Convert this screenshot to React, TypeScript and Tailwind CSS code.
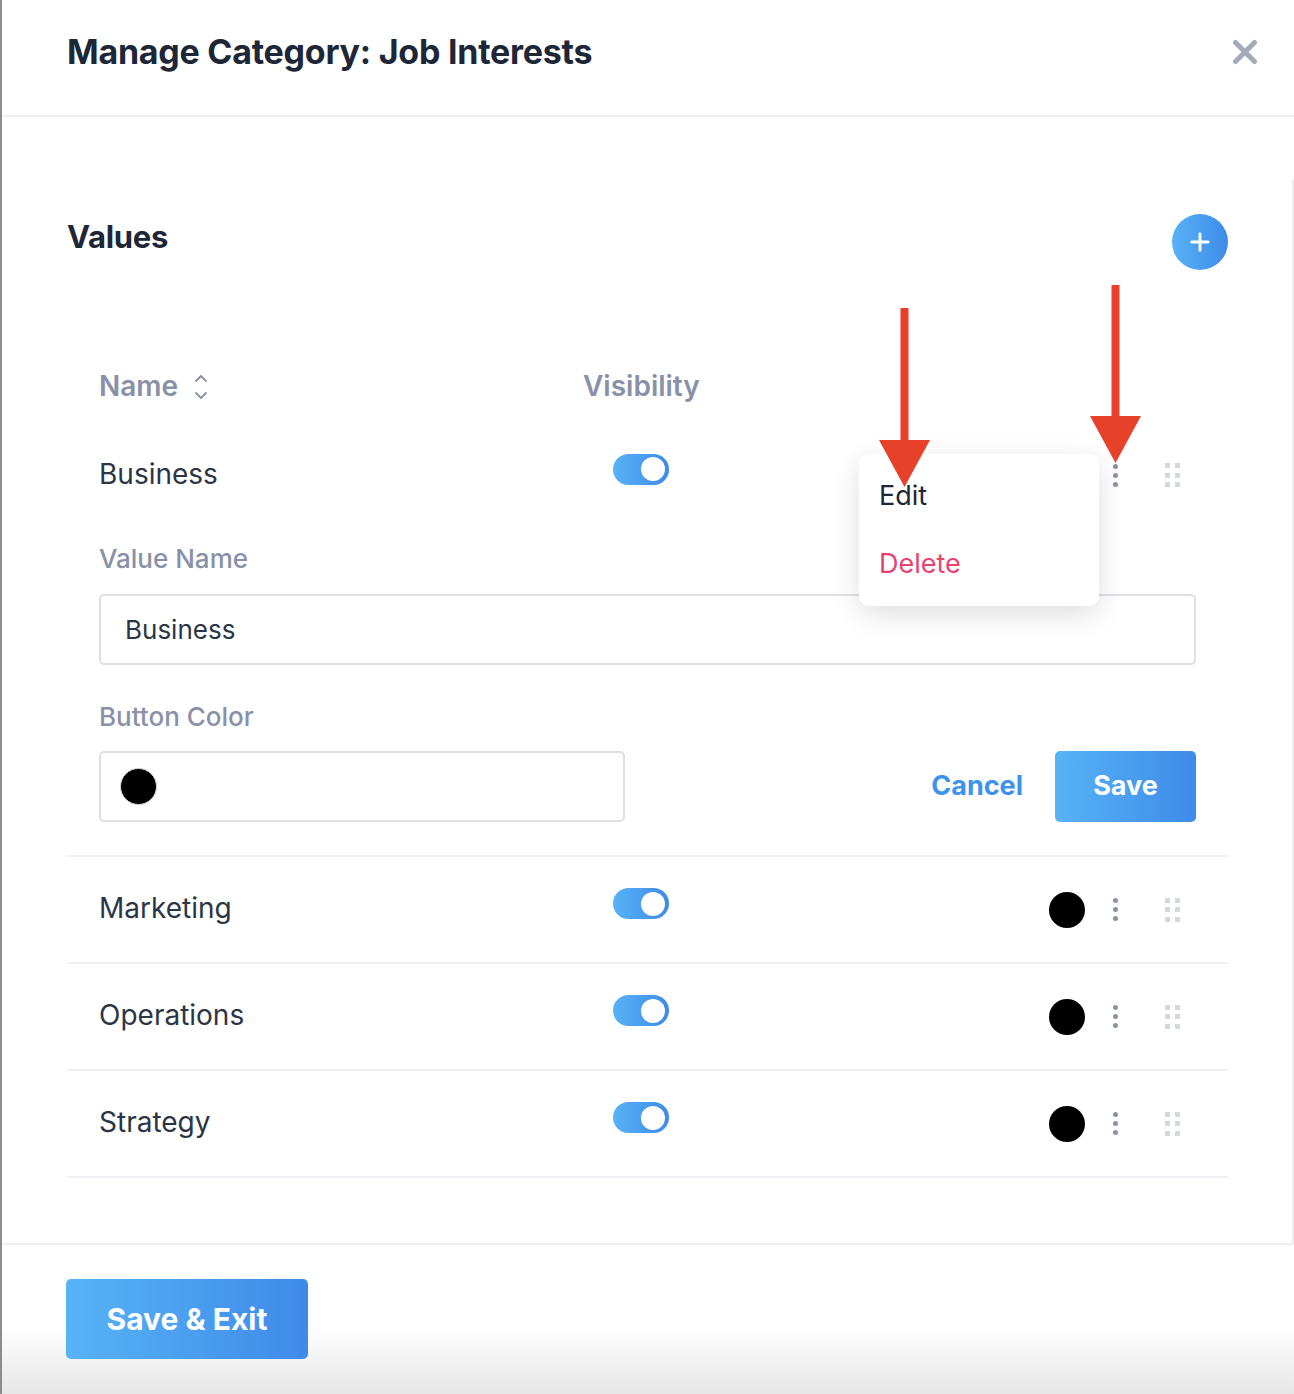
import { Plus } from 'lucide-react';

type Row = { name: string; color: string };

const rows: Row[] = [
    { name: 'Marketing', color: '#000000' },
    { name: 'Operations', color: '#000000' },
    { name: 'Strategy', color: '#000000' },
];

function Toggle() {
    return (
        <div className="w-[56px] h-[31px] rounded-full bg-linear-to-r from-[#58b3f6] to-[#3f8ae9] flex items-center justify-end pr-[4px]">
            <div className="w-[24px] h-[24px] rounded-full bg-white" />
        </div>
    );
}

function Kebab() {
    return (
        <div className="flex flex-col items-center gap-[4px] w-[6px]">
            <span className="block w-[5px] h-[5px] rounded-full bg-[#8a93a6]" />
            <span className="block w-[5px] h-[5px] rounded-full bg-[#8a93a6]" />
            <span className="block w-[5px] h-[5px] rounded-full bg-[#8a93a6]" />
        </div>
    );
}

function DragHandle() {
    return (
        <div className="grid grid-cols-2 gap-x-[5px] gap-y-[4.5px]">
            {Array.from({ length: 6 }).map((_, i) => (
                <span key={i} className="block w-[5px] h-[5px] bg-[#d3d7e0]" />
            ))}
        </div>
    );
}

function Arrow({ left, top, shaft }: { left: number; top: number; shaft: number }) {
    return (
        <svg
            className="absolute pointer-events-none"
            style={{ left, top }}
            width={52}
            height={shaft + 48}
            viewBox={`0 0 52 ${shaft + 48}`}
        >
            <rect x={21.5} y={0} width={8} height={shaft + 4} fill="#e8412a" />
            <polygon points={`0,${shaft} 51,${shaft} 25.5,${shaft + 47}`} fill="#e8412a" />
        </svg>
    );
}

export default function App() {
    return (
        <div
            className="relative w-[1294px] h-[1394px] bg-white border-l-2 border-[#8d8d8d] overflow-hidden"
            style={{ fontFamily: 'Inter, "Open Sans", sans-serif' }}
        >
            {/* header */}
            <div className="h-[117px] flex items-start justify-between pl-[65px] pr-[36px] pt-[26px] border-b-2 border-[#eff0f3]">
                <h1 className="text-[34px] font-bold text-[#1e2738] tracking-[-0.25px] leading-[52px]">
                    Manage Category: Job Interests
                </h1>
                <svg width="26" height="26" viewBox="0 0 26 26" className="mt-[13px]">
                    <path d="M3.5 3.5 L22.5 22.5 M22.5 3.5 L3.5 22.5" stroke="#a3aab9" strokeWidth="5" strokeLinecap="round" />
                </svg>
            </div>

            {/* body */}
            <div className="pt-[63px]">
                <div className="border-r-2 border-[#ececec] pl-[65px] pr-[64px] pt-[34px] pb-[65px]">
                    <div className="flex items-center justify-between h-[56px]">
                        <h2 className="text-[31px] font-bold text-[#1e2738] tracking-[-0.3px] -mt-[10px]">Values</h2>
                        <button className="w-[56px] h-[56px] rounded-full bg-linear-to-r from-[#58b3f6] to-[#3f8ae9] flex items-center justify-center">
                            <Plus className="w-[28px] h-[28px] text-white" strokeWidth={2.5} />
                        </button>
                    </div>

                    {/* table header */}
                    <div className="mt-[86px] h-[60px] flex items-center text-[28px] font-semibold text-[#8891a7]">
                        <div className="w-[516px] pl-[32px] flex items-center gap-[16px]">
                            <span>Name</span>
                            <svg width="14" height="28" viewBox="0 0 14 28" className="mt-[2px]">
                                <path d="M2 8 L7 3 L12 8 M2 20 L7 25 L12 20" fill="none" stroke="#8891a7" strokeWidth="1.8" strokeLinecap="round" strokeLinejoin="round" />
                            </svg>
                        </div>
                        <div>Visibility</div>
                    </div>

                    {/* expanded row */}
                    <div className="border-b-2 border-[#f0f0f4] pb-[33px]">
                        <div className="h-[118px] flex items-center">
                            <div className="w-[516px] pl-[32px] text-[28px] text-[#2b3545] -mt-[2px]">Business</div>
                            <div className="pl-[30px] -mt-[12px]">
                                <Toggle />
                            </div>
                            <div className="ml-auto flex items-center gap-[47px] pr-[48px]">
                                <Kebab />
                                <DragHandle />
                            </div>
                        </div>
                        <div className="px-[32px] pt-[11px]">
                            <label className="block text-[26px] font-medium text-[#8891a7] leading-[28px]">Value Name</label>
                            <div className="mt-[21px] h-[71px] border-2 border-[#dedfe5] rounded-[5px] flex items-center pl-[24px] text-[26px] text-[#2b3545]">
                                Business
                            </div>
                            <label className="block mt-[38px] text-[26px] font-medium text-[#8891a7] leading-[28px]">Button Color</label>
                            <div className="mt-[20px] flex items-center">
                                <div className="w-[526px] h-[71px] border-2 border-[#dedfe5] rounded-[5px] flex items-center pl-[19px]">
                                    <span className="block w-[37px] h-[37px] rounded-full bg-black border border-[#d9d9d9]" />
                                </div>
                                <div className="ml-auto flex items-center gap-[32px]">
                                    <button className="text-[27px] font-bold text-[#3d93ec]">Cancel</button>
                                    <button className="w-[141px] h-[71px] rounded-[5px] bg-linear-to-r from-[#58b3f6] to-[#3f8ae9] text-white text-[27px] font-bold">
                                        Save
                                    </button>
                                </div>
                            </div>
                        </div>
                    </div>

                    {rows.map((row) => (
                        <div key={row.name} className="h-[107px] border-b-2 border-[#f0f0f4] flex items-center">
                            <div className="w-[516px] pl-[32px] text-[28px] text-[#2b3545] -mt-[4px]">{row.name}</div>
                            <div className="pl-[30px] -mt-[12px]">
                                <Toggle />
                            </div>
                            <div className="ml-auto flex items-center pr-[48px]">
                                <span className="block w-[36px] h-[36px] rounded-full" style={{ backgroundColor: row.color }} />
                                <div className="ml-[27px]">
                                    <Kebab />
                                </div>
                                <div className="ml-[47px]">
                                    <DragHandle />
                                </div>
                            </div>
                        </div>
                    ))}
                </div>
            </div>

            {/* footer */}
            <div className="border-t-2 border-[#eff0f3] h-[160px] pl-[64px] pt-[34px] bg-[linear-gradient(to_bottom,#ffffff_52%,#e3e3e3_100%)]">
                <button className="w-[242px] h-[80px] rounded-[5px] bg-linear-to-r from-[#58b3f6] to-[#3f8ae9] text-white text-[30px] font-bold">
                    Save &amp; Exit
                </button>
            </div>

            {/* dropdown menu */}
            <div className="absolute left-[857px] top-[454px] w-[240px] h-[152px] bg-white rounded-[10px] shadow-[0_8px_28px_rgba(0,0,0,0.13)] pl-[20px] pt-[26px]">
                <div className="text-[27px] text-[#1e2536] leading-[32px]">Edit</div>
                <div className="mt-[36px] text-[27px] text-[#e8436f] leading-[32px]">Delete</div>
            </div>

            {/* annotation arrows */}
            <Arrow left={877} top={308} shaft={132} />
            <Arrow left={1088} top={285} shaft={131} />
        </div>
    );
}
